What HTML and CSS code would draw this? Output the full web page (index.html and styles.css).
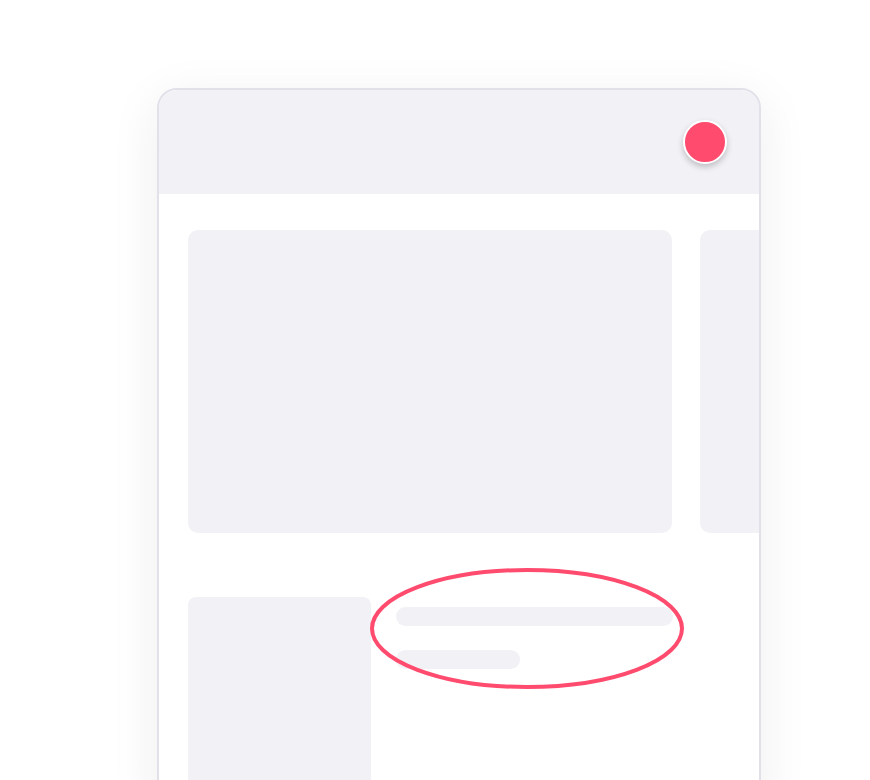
FILE: index.html
```html
<!DOCTYPE html>
<html>
<head>
<meta charset="utf-8">
<link rel="stylesheet" href="styles.css">
</head>
<body>
<div class="stage">
  <div class="card">
    <div class="header">
      <span class="dot"></span>
    </div>
    <div class="body">
      <div class="row-top">
        <div class="panel-big"></div>
        <div class="panel-side"></div>
      </div>
      <div class="row-bottom">
        <div class="thumb"></div>
        <div class="lines">
          <div class="line line-long"></div>
          <div class="line line-short"></div>
        </div>
      </div>
    </div>
  </div>
  <svg class="ring" width="316" height="125" viewBox="0 0 316 125">
    <ellipse cx="158" cy="62.5" rx="155" ry="58.5" fill="none" stroke="#ff4b6e" stroke-width="4"/>
  </svg>
</div>
</body>
</html>
```

FILE: styles.css
```css
html, body {
  margin: 0;
  padding: 0;
  background: #ffffff;
  overflow: hidden;
  font-family: "Liberation Sans", Arial, sans-serif;
}
.stage {
  position: relative;
  width: 870px;
  height: 780px;
  padding-top: 88px;
  padding-left: 157px;
  box-sizing: border-box;
}
.card {
  width: 604px;
  height: 720px;
  box-sizing: border-box;
  border: 2px solid #e2e1e9;
  border-radius: 20px;
  background: #ffffff;
  overflow: hidden;
  box-shadow: 0 12px 50px rgba(40, 40, 70, 0.08);
}
.header {
  height: 104px;
  background: #f2f1f6;
  display: flex;
  justify-content: flex-end;
  align-items: flex-start;
  padding: 30px 32px 0 0;
  box-sizing: border-box;
}
.dot {
  width: 44px;
  height: 44px;
  box-sizing: border-box;
  border-radius: 50%;
  background: #ff4b6e;
  border: 2.5px solid #ffffff;
  box-shadow: 0 3px 6px rgba(0, 0, 0, 0.22);
}
.body {
  padding: 36px 0 0 29px;
}
.row-top {
  display: flex;
  gap: 28px;
}
.panel-big {
  flex: 0 0 484px;
  height: 303px;
  border-radius: 10px;
  background: #f2f1f6;
}
.panel-side {
  flex: 0 0 200px;
  height: 303px;
  border-radius: 10px;
  background: #f2f1f6;
}
.row-bottom {
  display: flex;
  gap: 25px;
  margin-top: 64px;
}
.thumb {
  flex: 0 0 183px;
  height: 300px;
  border-radius: 8px;
  background: #f2f1f6;
}
.lines {
  padding-top: 10px;
  display: flex;
  flex-direction: column;
  gap: 24px;
}
.line {
  height: 19px;
  border-radius: 10px;
  background: #f2f1f6;
}
.line-long { width: 277px; }
.line-short { width: 124px; }
.ring {
  position: absolute;
  left: 369px;
  top: 566px;
}
```
